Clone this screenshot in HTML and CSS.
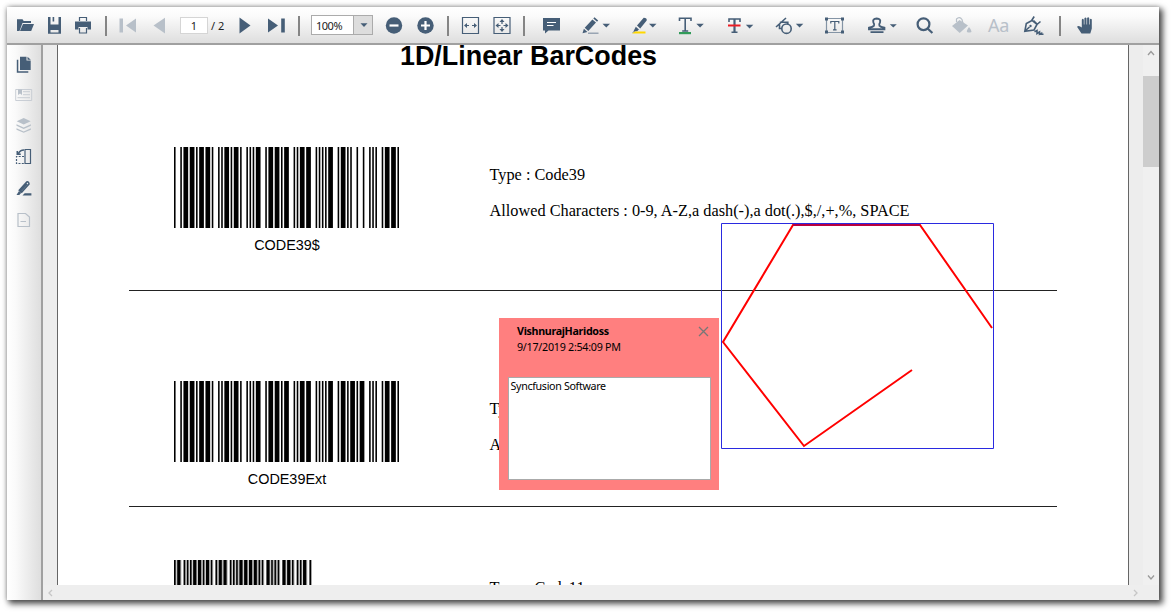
FILE: index.html
```html
<!DOCTYPE html>
<html lang="en">
<head>
<meta charset="utf-8">
<title>PDF Viewer</title>
<link rel="stylesheet" href="styles.css">
</head>
<body>
<div class="window">
  <header class="toolbar">
    <svg width="33" viewBox="7 7 33 36"><path class="ink" d="M17 31V19.200h5.500l1.200 1.800h7.300v2H22.500l-3 8zM23 24h11l-2.800 7H20z"/></svg>
    <svg width="28" viewBox="40 7 28 36"><path class="ink" fill-rule="evenodd" d="M48 17h2.500v7.500h8V17H61v16.700H48zm2.500 13v2.500h8V30zM52.600 17h1.600v4.500h-1.600z"/></svg>
    <svg width="30" viewBox="68 7 30 36"><path class="ink" d="M75 21.500h16v8h-3.500V27h-9v2.500H75z"/><path class="line thin" d="M79.500 21v-3.500h7V21M79.500 28v5h7v-5"/></svg>
    <i class="sep"></i>
    <svg width="36" viewBox="112 7 36 36"><path class="dim" d="M119.500 18.500h3.500v14h-3.500zM136 18.500v14L126 25.500z"/></svg>
    <svg width="26" viewBox="148 7 26 36"><path class="dim" d="M165 17.800v15.600L153.500 25.500z"/></svg>
    <span class="page-number">1</span>
    <span class="page-total">/ 2</span>
    <svg width="30" viewBox="229 7 30 36"><path class="ink" d="M239.500 17.500v16L250.500 25.500z"/></svg>
    <svg width="32" viewBox="259 7 32 36"><path class="ink" d="M268 18.500v14l10-7zM281.200 18.500h3.600v14h-3.600z"/></svg>
    <i class="sep"></i>
    <div class="zoom"><span>100%</span><b><svg width="19" height="18" viewBox="0 0 19 18"><path class="ink" d="M6.500 7.300h7L10 11z"/></svg></b></div>
    <svg width="35" viewBox="375 7 35 36"><circle class="ink" cx="394" cy="25.500" r="8.200"/><path class="cut" d="M389.500 25.500h9"/></svg>
    <svg width="30" viewBox="410 7 30 36"><circle class="ink" cx="425.500" cy="25.500" r="8.200"/><path class="cut" d="M421 25.500h9M425.500 21v9"/></svg>
    <i class="sep"></i>
    <svg width="31" viewBox="454 7 31 36"><path class="line thin" d="M462.500 17.500h16v16h-16z"/><path class="ink" d="M464 25.500l3-2.500v2h2v1h-2v2zM477 25.500l-3-2.500v2h-2v1h2v2z"/></svg>
    <svg width="31" viewBox="485 7 31 36"><path class="line thin" d="M494 17.500h16v16h-16zM502 21v3M502 27v3M497 25.500h3.500M503.500 25.500h3.500"/><path class="ink" d="M495.500 25.500l3-2.500v5zM508.500 25.500l-3-2.500v5zM502 19l2.500 3h-5zM502 32l2.500-3h-5z"/></svg>
    <i class="sep"></i>
    <svg width="39" viewBox="530 7 39 36"><path class="ink" d="M543 18h17v12.500h-11.500l-3.500 3V30.500h-2z"/><path class="lite" d="M547 22.500h9M547 25.500h6.500"/></svg>
    <svg width="51" viewBox="569 7 51 36"><path class="ink" d="M584.700 27.800l7.700-8.400 3.600 3.200-7.700 8.400zM582.500 33.300l1.400-4.500 3.500 3.200zM593.300 18.500l1.200-1.200 3.700 3.200-1.200 1.300z"/><path class="line thin faint" d="M588 33.200h10.500"/><path class="ink" d="M602.500 23.700h7.500l-3.700 3.800z"/></svg>
    <svg width="47" viewBox="620 7 47 36"><path class="ink" d="M637 25.500l6.700-7.700q3.500 0 3 2.700l-6.500 7.900zM635.800 26.800l3.200 2.800-2 1.600h-3.500zM632 33l1.500-1.600h2.300z"/><path fill="#ffd800" d="M632 33.600l3-2.200h10.500v2.200z"/><path class="ink" d="M649 23.700h7.500l-3.700 3.800z"/></svg>
    <svg width="49" viewBox="667 7 49 36"><path class="line" d="M679.500 21v-2.700h11.500v2.700M685.200 18v13M682.200 31h6"/><path fill="#319b59" d="M679 32h12v2.200h-12z"/><path class="ink" d="M696.300 23.700h7.500l-3.700 3.800z"/></svg>
    <svg width="48" viewBox="716 7 48 36"><path class="line" d="M729 22v-3h11V22M731.500 32.200h6"/><path class="line thick" d="M734.500 19v13"/><path fill="#ed1c24" d="M728 24.500h12.500v2H728z"/><path class="ink" d="M745.800 24.700h7.500l-3.700 3.800z"/></svg>
    <svg width="50" viewBox="764 7 50 36"><path class="line" d="M776 27l10-9M779.500 24.200v4.300h2.500M779.800 22.300h8v2"/><circle class="line" cx="786.500" cy="28.700" r="4.700"/><path class="ink" d="M795.800 23.700h7.500l-3.700 3.800z"/></svg>
    <svg width="43" viewBox="814 7 43 36"><path class="line thin faint" d="M826.500 18.500h16v14h-16z"/><path class="ink" d="M825 17.500h3v3h-3zM841 17.500h3v3h-3zM825 30.500h3v3h-3zM841 30.500h3v3h-3z"/><path class="line thin" d="M830.800 23.500v-2h8v2M834.800 21.500v8M833 29.800h3.600"/></svg>
    <svg width="50" viewBox="857 7 50 36"><path class="line stamp" d="M869 29.300v-1.500q4-.8 5-2.200.7-1.200-.6-3.200-1.200-3.700 3.300-3.900 4.500.2 3.300 3.900-1.300 2-.6 3.200 1 1.400 5 2.200v1.500z"/><path class="ink" d="M870.500 31.200h13v1.700h-13zM889.800 24.200h7l-3.500 3.300z"/></svg>
    <svg width="35" viewBox="907 7 35 36"><circle class="line thick" cx="923.500" cy="24.200" r="5.900"/><path class="line thick" d="M927.600 28.500l4.800 4.500"/></svg>
    <svg width="39" viewBox="942 7 39 36"><path class="dim" d="M952 26l7.500-6 8.500 5.500-8.300 7.500zM969 27q5 6 0 5.500-4.500.3 0-5.500z"/><path class="dimline" d="M956.500 22v-3q3-3 5.500.5l1.500 6"/></svg>
    <span class="font-tool">Aa</span>
    <svg width="39" viewBox="1014 7 39 36"><path class="line" d="M1024.800 31.300l1.500-7.800 5.700-3 5 4-3 5.500zM1025 31l4.500-4M1031.500 20.800l2.700-4.300M1037 24.500l3.500-3M1033.500 20.500l3.500 3.500M1034.500 31.700l2.500-1.200v3l2.500-1.500v2.200l2-1v1h2"/><circle class="ink" cx="1030.500" cy="26" r="1.200"/></svg>
    <i class="sep last"></i>
    <svg width="34" viewBox="1067 7 34 36"><path class="ink" d="M1081.500 33.500l-4.500-6.700q1.700-2 4.800.8V19.700q1-1.700 2 0v4.800h.6V18.200q1.100-1.500 2.100 0v6.300h.6V18q1.100-1.500 2.100 0v6.500h.6v-5q1-1.500 2 0v9l-1.500 5z"/></svg>
  </header>

  <div class="main">
    <nav class="sidebar">
      <svg height="36" viewBox="7 45 34 36"><path class="ink" d="M16.800 59.800h1.500v11.500h10v1.400H16.800zM20 56.800h6.500v3.700h4.200V70H20zM27.500 56.700l3.300 3h-3.300z"/></svg>
      <svg height="30" viewBox="7 81 34 30"><path class="dimline hair" d="M15.700 89.500h16v11h-16zM23 91.700h7M23 94.700h7M17.500 97.700h12.500"/><path class="dim" d="M18 89.500h4v5.500l-2-1.500-2 1.500z"/></svg>
      <svg height="30" viewBox="7 111 34 30"><path class="dim" d="M23.700 118l7 3.200-7 3.300-7-3.300zM16.500 124.300l7.200 3.200 7.200-3.200v1.500l-7.200 3.200-7.200-3.200zM16.500 128.300l7.200 3.200 7.200-3.200v1.500l-7.200 3-7.200-3z"/></svg>
      <svg height="32" viewBox="7 141 34 32"><path class="line thin" d="M25 149.500h5.500v14H25z"/><path class="line thin" stroke-dasharray="2 1.300" d="M24 156.500h-7.500v7H24"/><path class="line" d="M24 150q-4 0-5.500 3.500M17.300 151v3.300h3.500"/></svg>
      <svg height="31" viewBox="7 173 34 31"><path class="line" d="M19.300 190.200l7.500-8.200q2-.5 2.200 2l-7.300 8.200zM21 190.500l6-6.800"/><path class="ink" d="M19 191l2.300 1.800-2 2.200H16.500zM22.500 195.500l2.200-2.300h6.700v2.300z"/></svg>
      <svg height="32" viewBox="7 204 34 32"><path class="dimline" d="M18 213.500h7.500l4 3.500v9.500H18zM20.500 221.500h5.500"/></svg>
    </nav>

    <div class="viewer">
      <div class="scroll-area">
        <article class="page">
          <h1>1D/Linear BarCodes</h1>
          <section class="code first">
            <figure>
              <svg class="barcode" viewBox="0 0 143 10" preserveAspectRatio="none"><path d="M0 5H143" stroke-dasharray="1 3 1 1 3 1 3 1 1 1 3 1 3 1 1 3 1 1 1 1 3 1 1 1 3 1 1 3 1 1 1 1 1 1 3 3 1 1 3 1 3 1 1 1 3 3 1 1 1 1 3 1 3 3 1 1 1 1 1 1 1 1 3 3 1 1 3 1 1 1 1 3 1 3 1 3 1 1 1 1 1 3 1 1 3 1 3 1 1 1"/></svg>
              <figcaption>CODE39$</figcaption>
            </figure>
            <div class="info"><p>Type : Code39</p><p>Allowed Characters : 0-9, A-Z,a dash(-),a dot(.),$,/,+,%, SPACE</p></div>
          </section>
          <section class="code second">
            <figure>
              <svg class="barcode" viewBox="0 0 143 10" preserveAspectRatio="none"><path d="M0 5H143" stroke-dasharray="1 3 1 1 3 1 3 1 1 1 3 1 3 1 1 3 1 1 1 1 3 1 1 1 3 1 1 3 1 1 1 1 1 1 3 3 1 1 3 1 3 1 1 1 3 3 1 1 1 1 3 1 3 3 1 1 1 1 1 1 1 1 3 3 1 1 3 1 1 1 3 1 1 1 3 3 1 1 1 1 1 3 1 1 3 1 3 1 1 1"/></svg>
              <figcaption>CODE39Ext</figcaption>
            </figure>
            <div class="info"><p>Type :</p><p>Allowed</p></div>
          </section>
          <section class="code third">
            <figure>
              <svg class="barcode short" viewBox="0 0 86 10" preserveAspectRatio="none"><path d="M0 5H86" stroke-dasharray="1 1 2 2 1 1 1 1 1 1 2 1 2 1 1 1 2 1 1 2 1 1 2 1 2 2 1 1 1 1 1 1 2 1 2 1 2 1 2 1 1 1 1 2 2 1 1 1 1 1 1 2 2 1 2 1 1 2 1 1 1 1 2 2 1 1"/></svg>
            </figure>
            <div class="info"><p>Type : Code11</p></div>
          </section>

          <svg class="annotation" width="276" height="228" viewBox="719 222 276 228">
            <path class="shape" d="M992 328L920 225H793L723 342L804 446L912 370"/>
            <path class="bounds" d="M721.500 223.500h272v225h-272z"/>
            <path class="edge" d="M793 225h127"/>
          </svg>

          <aside class="note">
            <svg class="close" width="11" height="11" viewBox="0 0 11 11"><path d="M1 1l9 9M10 1l-9 9"/></svg>
            <strong>VishnurajHaridoss</strong>
            <time>9/17/2019 2:54:09 PM</time>
            <div class="note-text">Syncfusion Software</div>
          </aside>
        </article>
        <div class="vscroll">
          <svg width="16" height="16" viewBox="0 0 16 16"><path d="M5 10l3-3.500 3 3.500"/></svg>
          <div class="thumb"></div>
          <svg class="down" width="16" height="16" viewBox="0 0 16 16"><path d="M5 6.500l3 3.500 3-3.500"/></svg>
        </div>
      </div>
      <div class="hscroll">
        <svg width="16" height="15" viewBox="0 0 16 15"><path d="M9 5L6 8l3 3"/></svg>
        <svg width="16" height="15" viewBox="0 0 16 15"><path d="M7 5l3 3-3 3"/></svg>
      </div>
    </div>
  </div>
</div>
</body>
</html>
```
FILE: styles.css
```css
* { box-sizing: border-box; }
body {
  margin: 0;
  padding: 7px 12px 12px 7px;
  height: 612px;
  overflow: hidden;
  background: #fff;
  font-family: "Noto Sans", sans-serif;
}
svg { display: block; flex: none; }
.window {
  width: 1152px;
  height: 593px;
  background: #ededed;
  box-shadow: 3px 3px 6px 1px rgba(0, 0, 0, .65), 0 0 5px rgba(0, 0, 0, .3);
  display: flex;
  flex-direction: column;
}

/* Toolbar */
.toolbar {
  height: 38px;
  flex: none;
  display: flex;
  align-items: flex-start;
  background: linear-gradient(#fff, #fbfbfb 25%, #dedede);
  border-bottom: 2px solid #a0a0a0;
}
.toolbar > svg { height: 36px; }
.ink { fill: #465e77; }
.dim { fill: #b8c0c9; }
.line { fill: none; stroke: #465e77; stroke-width: 1.6; }
.thin { stroke-width: 1.2; }
.stamp { stroke-width: 1.9; }
.thick { stroke-width: 2.2; }
.faint { stroke: #8494a5; }
.dimline { fill: none; stroke: #b8c0c9; stroke-width: 1.2; }
.hair { stroke-width: .9; stroke: #c4cad1; }
.cut { stroke: #fff; stroke-width: 2.2; }
.lite { stroke: #fff; stroke-width: 1.2; }
.sep {
  width: 1.5px;
  height: 20px;
  margin: 9px 7.5px 0 7px;
  background: #858585;
  flex: none;
}
.toolbar .sep + svg { margin-left: -2px; }
.toolbar .last { margin-left: 6px; margin-right: 8.5px; }
.page-number {
  width: 28px;
  height: 17px;
  margin: 10px 0 0 6px;
  border: 1px solid #d5d5d5;
  background: #fff;
  font-size: 11px;
  line-height: 16px;
  text-align: center;
  color: #222;
}
.page-total {
  width: 18px;
  margin: 10px 0 0 3px;
  font-size: 11px;
  line-height: 18px;
  white-space: nowrap;
  color: #222;
}
.zoom {
  width: 62px;
  height: 20px;
  margin: 8px 2px 0 4px;
  display: flex;
  border: 1px solid #ababab;
  background: #fff;
  font-size: 11px;
  letter-spacing: -.5px;
  line-height: 20px;
  color: #222;
}
.zoom span { width: 41px; padding-left: 4px; }
.zoom b { width: 19px; background: #ddd; border-left: 1px solid #ababab; }
.font-tool {
  width: 33px;
  padding-left: 7px;
  font-size: 18px;
  letter-spacing: -.3px;
  line-height: 37px;
  color: #b8c0c9;
}

/* Body */
.main { flex: 1; display: flex; min-height: 0; }
.sidebar {
  width: 36px;
  background: linear-gradient(90deg, #fff, #fafafa 25%, #dedede);
  border-right: 2px solid #a0a0a0;
}
.sidebar svg { width: 34px; }
.viewer { flex: 1; display: flex; flex-direction: column; min-width: 0; }
.scroll-area { flex: 1; min-height: 0; display: flex; justify-content: space-between; padding-left: 14px; }
.page {
  position: relative;
  width: 1072px;
  height: 540px;
  overflow: hidden;
  background: #fff;
  border: solid #666;
  border-width: 0 1px;
  color: #000;
}
h1 {
  margin: -6px 0 0 342px;
  height: 36px;
  font: bold 26.900px/34px "Liberation Sans", sans-serif;
  white-space: nowrap;
}
.code {
  margin: 0 71px;
  padding-left: 45px;
  display: flex;
  border-bottom: 1px solid #222;
}
.first { height: 216px; padding-top: 72px; }
.second { height: 216px; padding-top: 90px; }
.third { height: 160px; padding-top: 53px; }
figure { margin: 0; width: 225px; flex: none; }
.barcode { width: 225px; height: 81px; }
.barcode.short { width: 137px; filter: drop-shadow(1px 0 0 rgba(0, 0, 0, .35)); }
.barcode path { stroke: #000; stroke-width: 10; }
figcaption {
  margin-top: 8px;
  padding-left: 1px;
  text-align: center;
  font: 14.400px/18px "Liberation Sans", sans-serif;
}
.info {
  margin-left: 90.500px;
  padding-top: 19px;
  font: 16.300px/18px "Liberation Serif", serif;
  white-space: nowrap;
}
.info p { margin: 0 0 18px; }

/* Annotations float over the page */
.annotation { position: absolute; left: 661px; top: 177px; }
.shape { fill: none; stroke: #f00; stroke-width: 2; }
.edge { stroke: #b8003f; stroke-width: 2; }
.bounds { fill: none; stroke: #2a2ae0; stroke-width: 1; }
.note {
  position: absolute;
  left: 441px;
  top: 273px;
  width: 220px;
  height: 172px;
  padding: 5px 8px 10px 9px;
  display: flex;
  flex-direction: column;
  background: #ff7f7f;
  font-size: 10.700px;
  letter-spacing: -.25px;
  line-height: 16px;
}
.note strong, .note time { padding-left: 9px; }
.note strong { letter-spacing: -.32px; }
.close { position: absolute; right: 10px; top: 8px; }
.close path { stroke: #777; stroke-width: 1.3; }
.note-text {
  height: 103px;
  margin-top: auto;
  padding: 0 1.500px;
  background: #fff;
  border: 1px solid #aaa;
  letter-spacing: -.33px;
}

/* Scrollbars */
.vscroll { width: 16px; display: flex; flex-direction: column; background: #f0f0f0; }
.vscroll path, .hscroll path { fill: none; stroke: #9a9a9a; stroke-width: 1.3; }
.thumb { height: 91px; margin-top: 15px; background: #cdcdcd; }
.down { margin-top: auto; }
.hscroll {
  height: 15px;
  flex: none;
  display: flex;
  justify-content: space-between;
  padding-right: 16px;
  background: #eee;
}
.hscroll path { stroke: #c6c6c6; }
```
